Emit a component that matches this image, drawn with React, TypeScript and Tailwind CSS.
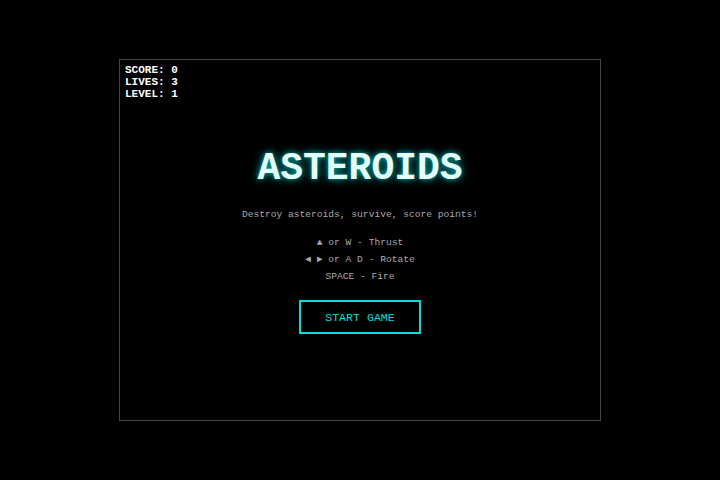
import React from "react";

export default function App() {
  return (
    <div className="w-[720px] h-[480px] bg-black flex items-center justify-center" style={{ fontFamily: '"Liberation Mono", "Courier New", monospace' }}>
      <div className="relative w-[482px] h-[362px] border border-[#444] bg-black flex flex-col items-center pt-[86px]">
        <div className="absolute left-[5px] top-[4px] text-white font-bold text-[11px] leading-[12px]">
          <div>SCORE: 0</div>
          <div>LIVES: 3</div>
          <div>LEVEL: 1</div>
        </div>
        <h1
          className="text-[38px] leading-[46px] font-bold text-[#e4fff8] [text-shadow:0_0_10px_rgba(0,255,255,0.55),0_0_4px_rgba(0,200,200,0.6)]"
        >
          ASTEROIDS
        </h1>
        <p className="mt-[16px] text-[9.6px] leading-[14px] text-[#aaa]">
          Destroy asteroids, survive, score points!
        </p>
        <div className="mt-[13px] flex flex-col items-center text-[9.6px] leading-[16.8px] text-[#aaa]">
          <div>▲ or W - Thrust</div>
          <div>◄ ► or A D - Rotate</div>
          <div>SPACE - Fire</div>
        </div>
        <button className="mt-[15px] w-[122px] h-[34px] border-2 border-[#0dd] text-[#0dd] text-[11.6px] bg-transparent">
          START GAME
        </button>
      </div>
    </div>
  );
}
